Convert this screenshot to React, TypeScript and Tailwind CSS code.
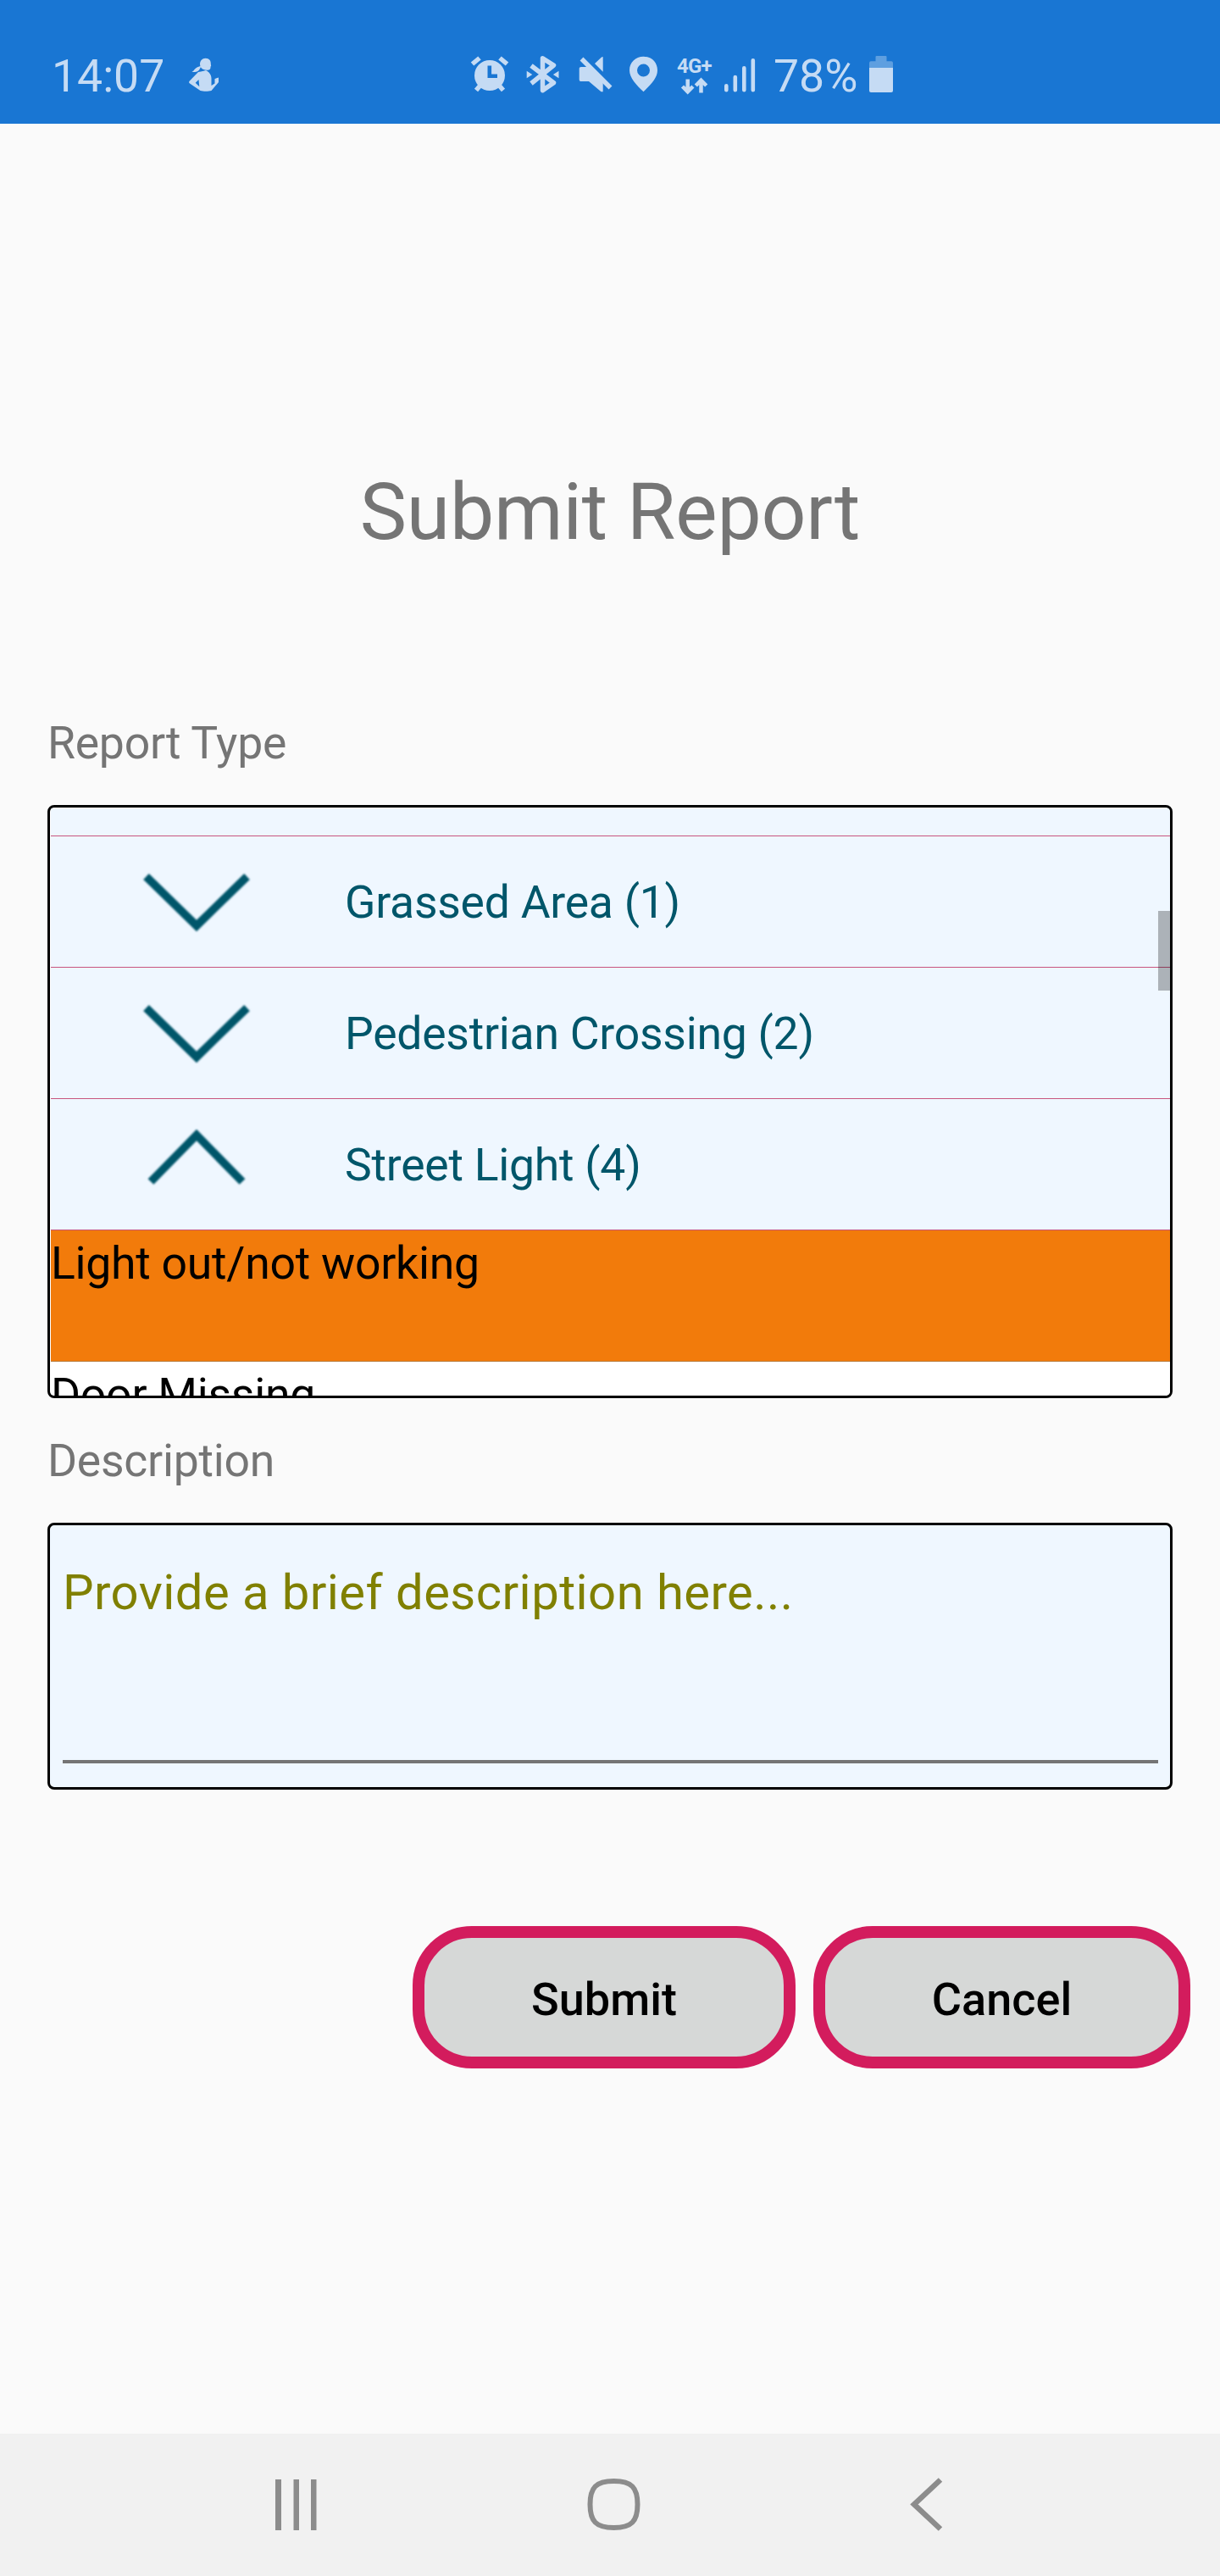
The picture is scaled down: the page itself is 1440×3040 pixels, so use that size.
import type { ReactNode } from "react";

const INK = "#c5dbf4";
const BAR = "#1976d3";

/* Status bar glyphs share one 64px tall band, y 58 to 122. */
function Glyph({ x, w, className, children }: { x: number; w: number; className: string; children: ReactNode }) {
  return (
    <svg
      className={`block h-16 shrink-0 ${className}`}
      width={w}
      height={64}
      viewBox={`${x} 58 ${w} 64`}
      fill={INK}
      stroke="none"
    >
      {children}
    </svg>
  );
}

function StatusBar() {
  return (
    <header className="flex h-[146px] shrink-0 items-start bg-[#1976d3] pl-[61px] pt-[58px] text-[53.5px] leading-[64px] tracking-normal text-[#c5dbf4]">
      <span className="w-[159px] shrink-0 whitespace-nowrap">14:07</span>
      <Glyph x={220} w={42} className="w-[42px]">
        <path d="M242.5 68.7c4.600 0 6.700 3.300 6.300 6.800l.4 2.400-.7.500c.2 3-.9 4.300-4.300 4.300l-2.200-.2c-3.500-.5-6-3.200-6-6.900 0-4 2.700-6.900 6.500-6.900z" />
        <path d="M237.500 78c-4.500.3-7.500 3-9 5.500l-2 .9c3.200 1.500 8 .6 9.500-3.400z" />
        <path
          fillRule="evenodd"
          d="M237 84.500l6-1.500c4 2 6.500 5.200 6.500 9.500v8.500l4-2.500v-5.500l4.500-1.500v5.500l-8.500 10c-3.500 1-9.500 1-13 0l-12.500-8.500c-1.200-.9-1.200-1.900-.2-3l10.200-10.500zM234.500 94l-3.800 3.700 4.600 4.600z"
        />
      </Glyph>
      <Glyph x={552} w={50} className="ml-[290px] w-[50px]">
        <circle cx="578" cy="89" r="18" />
        <path
          d="M557.500 75.500l8.500-7M598.500 75.500l-8.500-7M562 106.500l6-7M594 106.500l-6-7"
          stroke={INK}
          strokeWidth="5.500"
          fill="none"
        />
        <path d="M577.800 77.500v12.200H587" stroke={BAR} strokeWidth="4.600" fill="none" />
      </Glyph>
      <Glyph x={618} w={46} className="ml-[16px] w-[46px]">
        <path
          d="M627 77.500l26.500 20.300-13 8.800V68.800l13 8.300L627 98.500"
          fill="none"
          stroke={INK}
          strokeWidth="5.500"
          strokeLinejoin="round"
        />
        <path d="M621.700 83.800l6.600 4.200-6.600 4.200zM659.500 83.800l-6.600 4.200 6.600 4.200z" />
      </Glyph>
      <Glyph x={680} w={46} className="ml-[16px] w-[46px]">
        <path d="M686 79h8l17.700 17.500v11.800h-2.200L695 96h-9c-1.500 0-2.300-.8-2.300-2.300V81.300c0-1.500.8-2.300 2.300-2.300zM702 75l8-7.500 1.700-.5v17.700z" />
        <path d="M686.500 69.500l34 34" stroke={INK} strokeWidth="5.500" fill="none" />
      </Glyph>
      <Glyph x={740} w={40} className="ml-[14px] w-[40px]">
        <path
          fillRule="evenodd"
          d="M759.500 66.700c9.500 0 16.500 7 16.500 16.200 0 9-8 17-16.500 25.400-8.500-8.400-16.500-16.400-16.500-25.400 0-9.200 7-16.200 16.500-16.200zM759.500 75.500a7.500 7.500 0 1 0 0 15 7.500 7.500 0 0 0 0-15z"
        />
      </Glyph>
      <div className="ml-[19px] flex h-16 w-[45px] shrink-0 flex-col pt-[8px]">
        <span className="whitespace-nowrap text-[24px] font-bold leading-6 tracking-[-0.8px]">4G+</span>
        <svg className="block" width="45" height="22" viewBox="799 90 45 22" fill="none" stroke={INK} strokeWidth="4.500">
          <path d="M811.700 93.500V108M805.500 102l6.200 6.200 6.200-6.200M827.500 109.500V95M821.300 101l6.200-6.200 6.200 6.200" />
        </svg>
      </div>
      <Glyph x={852} w={42} className="ml-[8px] w-[42px]">
        <path
          d="M857.300 101.300v5M867.800 91v15.300M878.300 80.300v26M888.800 71.300v35"
          stroke={INK}
          strokeWidth="4.600"
          strokeLinecap="round"
        />
      </Glyph>
      <span className="ml-[19px] w-[109px] shrink-0 whitespace-nowrap">78%</span>
      <Glyph x={1022} w={36} className="w-[36px]">
        <path fill="#5e9fe0" d="M1033.500 67q0-1 1-1h11q1 0 1 1v5.300h5.500q2 0 2 2V80h-28v-5.700q0-2 2-2h5.500z" />
        <path d="M1026 80h28v27q0 2-2 2h-24q-2 0-2-2z" />
      </Glyph>
    </header>
  );
}

function GroupRow({ label, open = false }: { label: string; open?: boolean }) {
  return (
    <div className="flex h-[155px] shrink-0 items-center border-b border-[#c8557f] bg-[#eff7ff]">
      <svg
        className="ml-[99px] block shrink-0 blur-[0.8px]"
        width="146"
        height="154"
        viewBox="159 0 146 154"
        fill="none"
        stroke="#00566a"
        strokeWidth="9.500"
      >
        <path d={open ? "M178 97.500L232 42.500l54 55" : "M172.500 47.500l59.500 58 59.500-58"} />
      </svg>
      <span className="ml-[102px] whitespace-nowrap pt-px text-[#00566a]">{label}</span>
    </div>
  );
}

function ReportTypeList() {
  return (
    <div className="relative mt-[41px] h-[700px] shrink-0 overflow-hidden rounded-[8px] border-[3px] border-black bg-white pl-px pt-px leading-[64px]">
      <div className="h-[33px] border-b border-[#c8557f] bg-[#eff7ff]" />
      <GroupRow label="Grassed Area (1)" />
      <GroupRow label="Pedestrian Crossing (2)" />
      <GroupRow label="Street Light (4)" open />
      <div className="h-[155px] border-b border-[#b97a3a] bg-[#f27b0b] pt-[7px] text-black">Light out/not working</div>
      <div className="h-[155px] bg-white pt-[7px] text-black">Door Missing</div>
      <div className="absolute right-0 top-[122px] h-[94px] w-[14px] bg-black/28" />
    </div>
  );
}

function NavBar() {
  return (
    <nav className="flex h-[168px] shrink-0 items-start bg-[#f1f1f1] pl-[320px] pt-[48px]">
      <svg className="block shrink-0" width="60" height="72" viewBox="320 2920 60 72" fill="#8c8c8c">
        <path d="M325 2926h7v60h-7zM346.500 2926h6.500v60h-6.500zM367 2926h6.500v60H367z" />
      </svg>
      <svg className="ml-[308px] block shrink-0" width="72" height="72" viewBox="688 2920 72 72" fill="none" stroke="#8c8c8c" strokeWidth="6">
        <path d="M724.500 2928c21 0 28 7.500 28 27.500s-7 27.500-28 27.500-28-7.500-28-27.500 7-27.500 28-27.500z" />
      </svg>
      <svg className="ml-[308px] block shrink-0" width="56" height="72" viewBox="1068 2920 56 72" fill="none" stroke="#8c8c8c" strokeWidth="6.500">
        <path d="M1110 2926.500l-31 29 31 29" />
      </svg>
    </nav>
  );
}

export default function App() {
  return (
    <div className="flex h-[3040px] w-[1440px] flex-col overflow-hidden bg-[#fafafa] font-['Roboto',sans-serif] text-[53.5px] leading-[64px] tracking-[-0.25px]">
      <StatusBar />
      <main className="flex flex-1 flex-col px-[56px] text-[#757575]">
        <h1 className="mt-[404px] text-center text-[93px] leading-[110px] tracking-[-0.15px]">Submit Report</h1>
        <h2 className="mt-[185px]">Report Type</h2>
        <ReportTypeList />
        <h2 className="mt-[42px]">Description</h2>
        <div className="mt-[41px] h-[315px] shrink-0 rounded-[8px] border-[3px] border-black bg-[#eff7ff] pl-[15px] pr-[14px] pt-[45px]">
          <div className="h-[236px] border-b-[4px] border-[#757575] text-[58px] leading-[68px] tracking-[0.44px] text-[#808000]">
            Provide a brief description here...
          </div>
        </div>
        <div className="-mr-[21px] mt-[161px] flex justify-end gap-[21px] text-[54px] font-medium tracking-normal text-black">
          <button className="h-[168px] w-[452px] rounded-[70px] border-[14px] border-[#d31c5d] bg-[#d6d8d7] pt-[5px]">Submit</button>
          <button className="h-[168px] w-[445px] rounded-[70px] border-[14px] border-[#d31c5d] bg-[#d6d8d7] pt-[5px]">Cancel</button>
        </div>
      </main>
      <NavBar />
    </div>
  );
}
